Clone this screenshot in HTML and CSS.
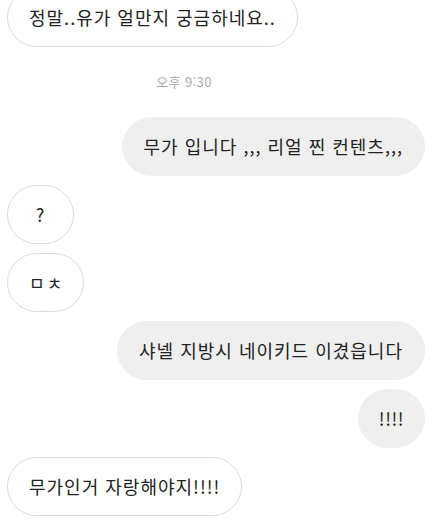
FILE: index.html
```html
<!DOCTYPE html>
<html lang="ko">
<head>
<meta charset="utf-8">
<link rel="stylesheet" href="styles.css">
</head>
<body>
<div class="chat">
  <div class="row in first"><div class="bubble out-line">정말..유가 얼만지 궁금하네요..</div></div>
  <div class="time">오후 9:30</div>
  <div class="row me"><div class="bubble filled">무가 입니다 ,,, 리얼 찐 컨텐츠,,,</div></div>
  <div class="row in"><div class="bubble out-line short">?</div></div>
  <div class="row in"><div class="bubble out-line short small">ㅁㅊ</div></div>
  <div class="row me"><div class="bubble filled">샤넬 지방시 네이키드 이겼읍니다</div></div>
  <div class="row me"><div class="bubble filled short bang">!!!!</div></div>
  <div class="row in"><div class="bubble out-line">무가인거 자랑해야지!!!!</div></div>
</div>
</body>
</html>
```

FILE: styles.css
```css
html, body {
  margin: 0;
  padding: 0;
  background: #ffffff;
}
body {
  width: 439px;
  height: 525px;
  overflow: hidden;
  font-family: "Noto Sans CJK KR", "Noto Sans", sans-serif;
  color: #222222;
}
.chat {
  display: flex;
  flex-direction: column;
  gap: 9px;
  padding: 0 14px 0 7px;
}
.row {
  display: flex;
}
.row.first {
  margin-top: -12px;
}
.row.in {
  justify-content: flex-start;
}
.row.me {
  justify-content: flex-end;
}
.bubble {
  box-sizing: border-box;
  height: 59px;
  line-height: 57px;
  padding: 0 21px;
  border-radius: 30px;
  font-size: 18px;
  letter-spacing: 1px;
  white-space: nowrap;
  text-align: center;
}
.out-line {
  border: 1px solid #dbdbdb;
  background: #ffffff;
}
.filled {
  border: 1px solid #efefef;
  background: #efefef;
}
.short {
  min-width: 67px;
}
.small {
  font-size: 17px;
  letter-spacing: 2px;
  padding: 0 19px 0 21px;
}
.bang {
  padding: 0 18px;
  letter-spacing: 0.5px;
}
.time {
  margin: 16px 0 16px;
  padding-right: 64px;
  text-align: center;
  font-size: 13px;
  letter-spacing: 0.4px;
  line-height: 20px;
  color: #a8a8a8;
}
```
